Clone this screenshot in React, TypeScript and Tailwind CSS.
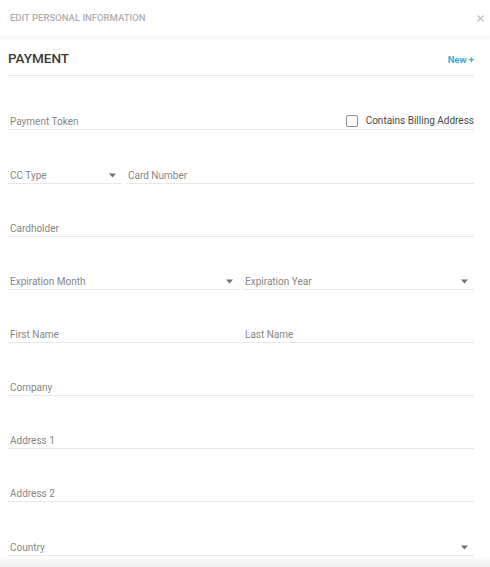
import React from "react";

type Field = { label: string; select?: boolean };

function Caret() {
  return (
    <svg className="mb-[5px] h-[5px] w-[7px] shrink-0" viewBox="0 0 7 5">
      <path d="M0 0.5h7L3.5 4.5z" fill="#707070" />
    </svg>
  );
}

function FieldBox({ label, select, className = "" }: Field & { className?: string }) {
  return (
    <div className={`flex h-full items-end justify-between border-b border-[#e8e8e8] pl-[2px] pr-[6px] ${className}`}>
      <span className="text-[10px] leading-[14px] text-[#868686]">{label}</span>
      {select ? <Caret /> : null}
    </div>
  );
}

export default function App() {
  return (
    <div className="h-[567px] w-full overflow-hidden bg-white font-['Roboto','Liberation_Sans',sans-serif]">
      <div className="relative z-10 flex h-[36px] items-center justify-between pl-[10px] pr-[6px] shadow-[0_2px_4px_rgba(0,0,0,0.06)]">
        <span className="text-[9.5px] font-medium uppercase leading-none text-[#b0b0b0]">Edit Personal Information</span>
        <svg className="h-[7px] w-[7px]" viewBox="0 0 7 7">
          <path d="M0.5 0.5l6 6M6.5 0.5l-6 6" stroke="#c2c2c2" strokeWidth="1.4" />
        </svg>
      </div>

      <div className="pl-[8px] pr-[16px]">
        <div className="flex items-baseline justify-between border-b border-[#e8e8e8] pb-[6px] pt-[11px]">
          <span className="text-[13.5px] font-medium leading-[22px] text-[#3a3a3a]">PAYMENT</span>
          <span className="text-[9.5px] font-bold text-[#33b0d9]">New +</span>
        </div>

        <div className="flex h-[54px] items-end justify-between border-b border-[#e8e8e8] pl-[2px]">
          <span className="text-[10px] leading-[14px] text-[#868686]">Payment Token</span>
          <label className="mb-[1px] flex items-center gap-[8px]">
            <span className="h-[12px] w-[12px] rounded-[2px] border border-[#8c8c8c] bg-white" />
            <span className="text-[10px] leading-[14px] text-[#4a4a4a]">Contains Billing Address</span>
          </label>
        </div>

        <div className="flex h-[54px] gap-[4px]">
          <FieldBox label="CC Type" select className="w-[114px]" />
          <FieldBox label="Card Number" className="flex-1" />
        </div>

        <div className="h-[53px]">
          <FieldBox label="Cardholder" />
        </div>

        <div className="grid h-[53px] grid-cols-2 gap-x-[4px]">
          <FieldBox label="Expiration Month" select />
          <FieldBox label="Expiration Year" select />
        </div>

        <div className="grid h-[53px] grid-cols-2 gap-x-[4px]">
          <FieldBox label="First Name" />
          <FieldBox label="Last Name" />
        </div>

        <div className="h-[53px]">
          <FieldBox label="Company" />
        </div>

        <div className="h-[53px]">
          <FieldBox label="Address 1" />
        </div>

        <div className="h-[53px]">
          <FieldBox label="Address 2" />
        </div>

        <div className="h-[54px]">
          <FieldBox label="Country" select />
        </div>
      </div>

      <div className="h-[11px] bg-linear-to-b from-white to-[#efefef]" />
    </div>
  );
}
